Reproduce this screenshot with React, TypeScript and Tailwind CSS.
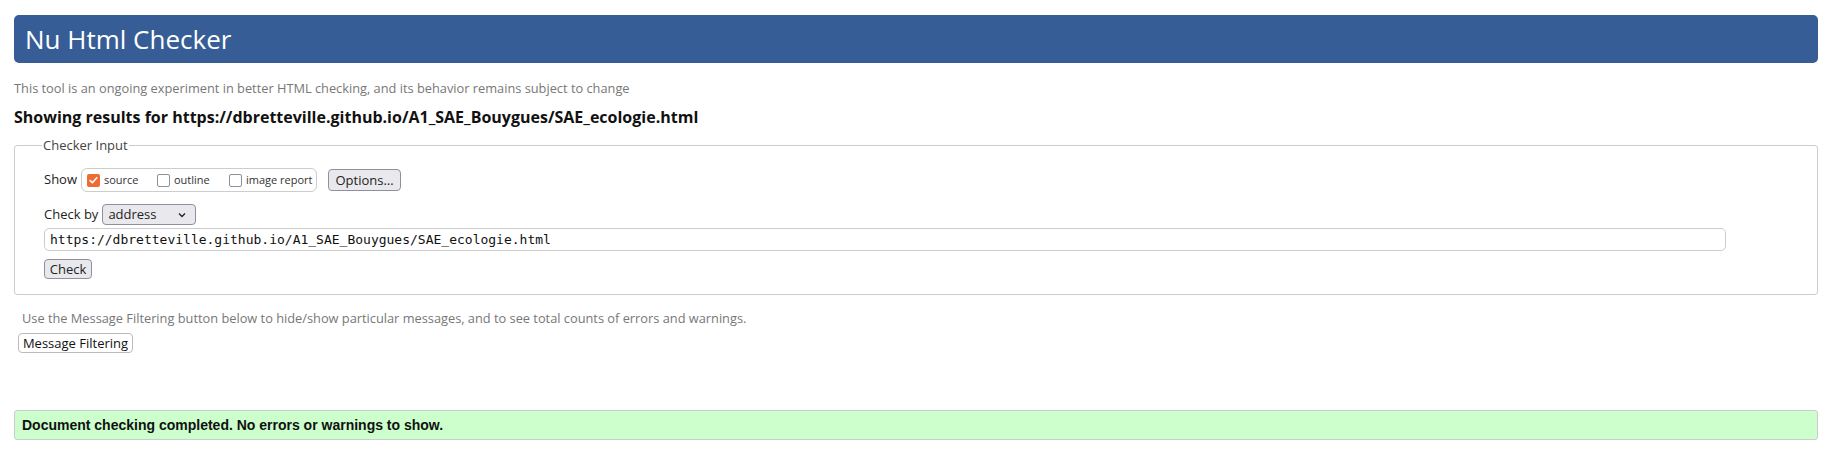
import React from 'react';

const ui = { fontFamily: '"Open Sans", "Noto Sans", sans-serif' };
const mono = { fontFamily: '"DejaVu Sans Mono", "Liberation Mono", monospace' };
const arial = { fontFamily: '"Liberation Sans", Arial, sans-serif' };

const Box: React.FC<{ checked?: boolean }> = ({ checked }) =>
  checked ? (
    <span className="inline-flex items-center justify-center w-[13px] h-[13px] rounded-[2px] bg-[#ef6b34]">
      <svg width="11" height="11" viewBox="0 0 11 11">
        <path d="M2.2 5.6 L4.4 7.8 L8.8 2.8" fill="none" stroke="#fff" strokeWidth="1.6" strokeLinecap="round" strokeLinejoin="round" />
      </svg>
    </span>
  ) : (
    <span className="inline-block w-[13px] h-[13px] rounded-[2px] border border-[#8f8f9d] bg-white" />
  );

const App: React.FC = () => {
  return (
    <div className="w-[1843px] h-[452px] bg-white pt-[15px] px-[14px] text-[#222]" style={ui}>
      <h1 className="h-[48px] w-[1804px] bg-[#365d95] rounded-[5px] flex items-center pl-[11px] text-white text-[26px] leading-none">
        Nu Html Checker
      </h1>

      <p className="mt-[17px] text-[12.8px] text-[#777] leading-[16px]">
        This tool is an ongoing experiment in better HTML checking, and its behavior remains subject to change
      </p>

      <h2 className="mt-[11px] text-[16px] font-bold text-[#111] leading-[20px]">
        Showing results for https://dbretteville.github.io/A1_SAE_Bouygues/SAE_ecologie.html
      </h2>

      <fieldset className="mt-[10px] w-[1804px] border border-[#ccc] rounded-[3px] pl-[29px] pt-0 pb-[15px]">
        <legend className="px-[1px] ml-[-2px] text-[13px] text-[#444] leading-[16px]">Checker Input</legend>

        <div className="flex items-center mt-[15px] h-[24px]">
          <span className="text-[13px] text-[#222] mr-[4px]">Show</span>
          <div className="flex items-center h-[24px] w-[236px] border border-[#ccc] rounded-[6px] pl-[5px] text-[11px] text-[#333]">
            <Box checked />
            <span className="ml-[4px] w-[53px]">source</span>
            <Box />
            <span className="ml-[4px] w-[55px]">outline</span>
            <Box />
            <span className="ml-[4px]">image report</span>
          </div>
          <button className="ml-[11px] h-[22px] w-[73px] bg-[#e9e9ed] border border-[#8f8f9d] rounded-[4px] text-[13px] text-[#222] leading-none">
            Options…
          </button>
        </div>

        <div className="flex items-center mt-[12px] h-[21px]">
          <span className="text-[13px] text-[#222] mr-[4px]">Check by</span>
          <div className="flex items-center justify-between h-[21px] w-[94px] bg-[#e9e9ed] border border-[#8f8f9d] rounded-[4px] px-[5px] text-[13px] text-[#222]">
            <span>address</span>
            <svg width="8" height="6" viewBox="0 0 8 6" className="mr-[4px]">
              <path d="M1 1.5 L4 4.5 L7 1.5" fill="none" stroke="#222" strokeWidth="1.3" />
            </svg>
          </div>
        </div>

        <div className="mt-[3px] h-[23px] w-[1682px] border border-[#ccc] rounded-[5px] flex items-center px-[5px] text-[13px] text-[#111]" style={mono}>
          https://dbretteville.github.io/A1_SAE_Bouygues/SAE_ecologie.html
        </div>

        <button className="mt-[8px] h-[20px] w-[48px] bg-[#e9e9ed] border border-[#8f8f9d] rounded-[4px] text-[13px] text-[#222] leading-none block">
          Check
        </button>
      </fieldset>

      <p className="mt-[15px] ml-[8px] text-[12.8px] text-[#777] leading-[16px]">
        Use the Message Filtering button below to hide/show particular messages, and to see total counts of errors and warnings.
      </p>

      <button className="mt-[7px] ml-[4px] h-[20px] w-[115px] bg-white border border-[#bbb] rounded-[4px] text-[13px] text-[#111] leading-none block">
        Message Filtering
      </button>

      <div className="mt-[57px] w-[1804px] h-[30px] bg-[#ccffcc] border border-[#ccc] rounded-[3px] flex items-center pl-[7px] text-[14px] font-bold text-[#111]" style={arial}>
        Document checking completed. No errors or warnings to show.
      </div>
    </div>
  );
};

export default App;
